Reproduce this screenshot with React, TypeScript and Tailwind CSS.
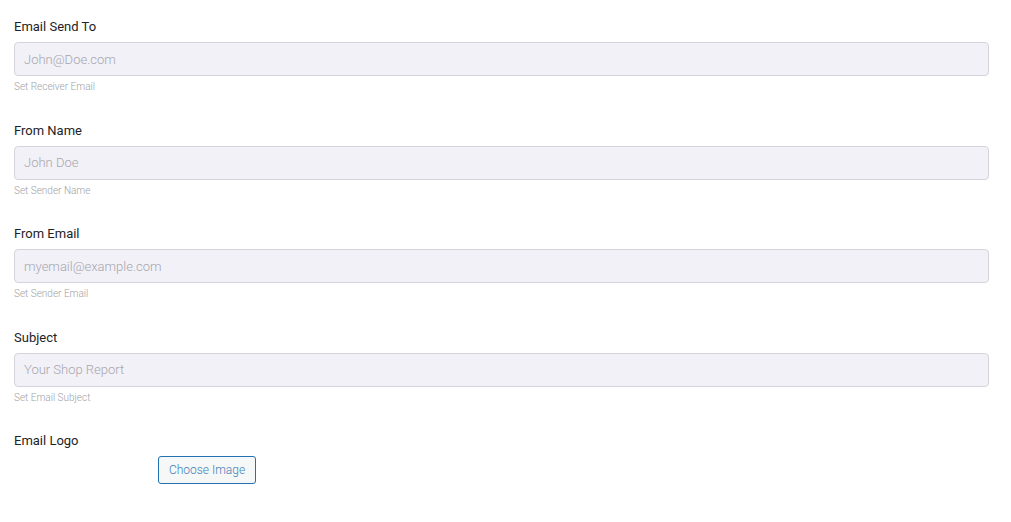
const fields = [
  { label: "Email Send To", placeholder: "John@Doe.com", help: "Set Receiver Email" },
  { label: "From Name", placeholder: "John Doe", help: "Set Sender Name" },
  { label: "From Email", placeholder: "myemail@example.com", help: "Set Sender Email" },
  { label: "Subject", placeholder: "Your Shop Report", help: "Set Email Subject" },
];

export default function App() {
  return (
    <div className="min-h-screen bg-white pl-[14px] pr-[22px] pt-[17px] font-['Roboto',sans-serif]">
      {fields.map((f) => (
        <div key={f.label} className="mb-[26.5px]">
          <label className="block text-[13px] leading-[20px] text-[#1d2327]">{f.label}</label>
          <input
            type="text"
            placeholder={f.placeholder}
            className="mt-[5px] block h-[34px] w-full rounded-[4px] border border-[#d5d4dc] bg-[#f2f1f7] px-[9px] text-[13px] font-light text-[#333] placeholder:text-[#a6a6ae] outline-none"
          />
          <p className="mt-[4px] text-[10px] font-light leading-[14px] text-[#9ea1a5]">{f.help}</p>
        </div>
      ))}
      <div>
        <label className="block text-[13px] leading-[20px] text-[#1d2327]">Email Logo</label>
        <button className="ml-[144px] mt-[5px] h-[28px] w-[98px] rounded-[3px] border border-[#2271b1] bg-[#f6f7f7] text-[12px] font-light text-[#3f80ba]">
          Choose Image
        </button>
      </div>
    </div>
  );
}
